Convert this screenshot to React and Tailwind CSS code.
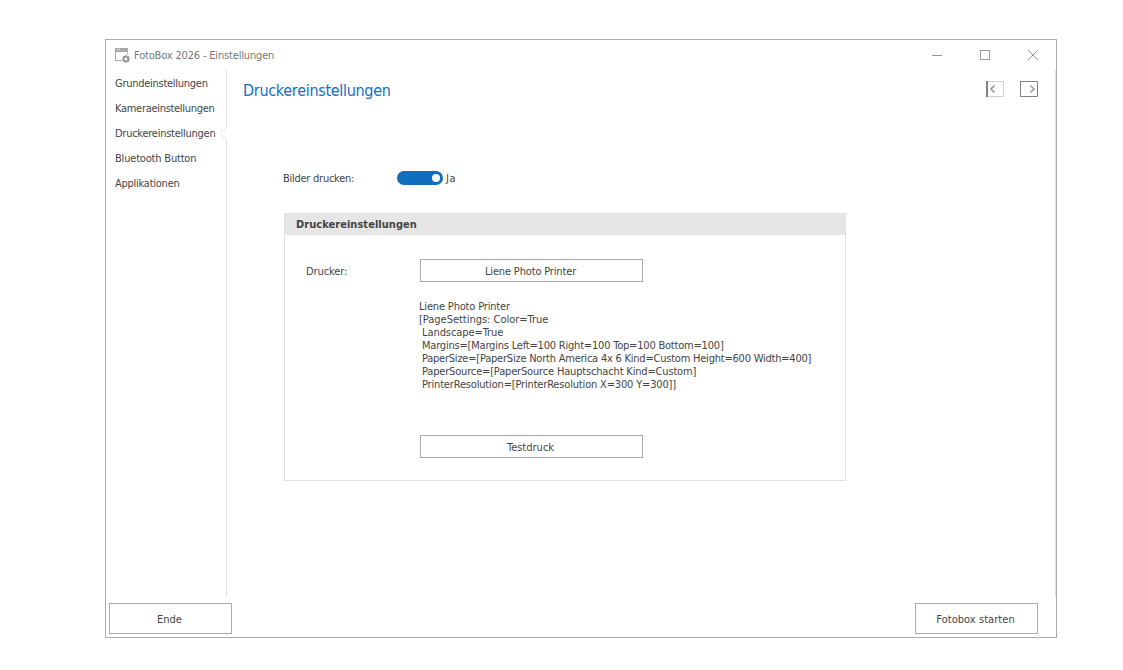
import React from 'react';

const navItems = [
  { label: 'Grundeinstellungen', className: 'tracking-[-0.27px]' },
  { label: 'Kameraeinstellungen', className: 'tracking-[-0.3px]' },
  { label: 'Druckereinstellungen', className: 'tracking-[-0.26px]' },
  { label: 'Bluetooth Button', className: 'tracking-[-0.19px]' },
  { label: 'Applikationen', className: 'tracking-[-0.25px]' },
];

const printerInfo = [
  { text: 'Liene Photo Printer', className: 'tracking-[-0.17px]' },
  { text: '[PageSettings: Color=True', className: 'tracking-[-0.02px]' },
  { text: ' Landscape=True', className: 'tracking-[-0.08px]' },
  { text: ' Margins=[Margins Left=100 Right=100 Top=100 Bottom=100]', className: 'tracking-[-0.2px]' },
  { text: ' PaperSize=[PaperSize North America 4x 6 Kind=Custom Height=600 Width=400]', className: 'tracking-[-0.22px]' },
  { text: ' PaperSource=[PaperSource Hauptschacht Kind=Custom]', className: 'tracking-[-0.17px]' },
  { text: ' PrinterResolution=[PrinterResolution X=300 Y=300]]', className: 'tracking-[-0.17px]' },
];

const AppIcon = () => (
  <svg width="16" height="16" viewBox="0 0 16 16" className="shrink-0">
    <path d="M0 1h13v4H0z" fill="#a8a8a8" />
    <path d="M2 2.5h1M4 2.5h1" stroke="#fff" />
    <path d="M.5 5v8.5H7" fill="none" stroke="#a8a8a8" />
    <path d="M12.5 5v3" stroke="#d0d0d0" />
    <circle cx="11" cy="12" r="2.3" fill="none" stroke="#999" strokeWidth="1.9" />
    <path
      d="M11 8v1.500M11 14.500V16M7 12h1.500M13.500 12H15M8.200 9.200l1 1M12.800 13.800l1 1M13.800 9.200l-1 1M9.200 13.800l-1 1"
      stroke="#999"
      strokeWidth="1.5"
    />
  </svg>
);

const PushButton = ({ children, className }) => (
  <button
    className={`flex items-center justify-center border border-[#ababab] bg-white pr-[2px] pt-px ${className}`}
  >
    {children}
  </button>
);

const TitleBar = () => (
  <header className="flex h-[30px] shrink-0 items-center justify-between pl-[9px] pr-[17px] text-[#777]">
    <div className="flex items-center gap-[3px]">
      <AppIcon />
      <span className="pt-px tracking-[-0.17px]">FotoBox 2026 - Einstellungen</span>
    </div>
    <svg width="108" height="12" viewBox="0 0 108 12" fill="none" stroke="#999" shapeRendering="crispEdges">
      <path d="M1 6.5h10" />
      <path d="M49.5 1.5h9v9h-9z" />
      <path d="M97 1l10 10M107 1L97 11" shapeRendering="auto" />
    </svg>
  </header>
);

const Sidebar = () => (
  <nav className="relative w-[121px] shrink-0">
    <ul className="flex flex-col pl-[9px] pt-px">
      {navItems.map((item) => (
        <li key={item.label} className={`flex h-[25px] items-center ${item.className}`}>
          {item.label}
        </li>
      ))}
    </ul>
    {/* divider with the notch that marks the selected page */}
    <svg
      width="8"
      height="527"
      viewBox="0 0 8 527"
      fill="none"
      stroke="#e0e0e0"
      className="absolute right-0 top-0"
    >
      <path d="M7.5 0v57l-6.5 6.5 6.5 6.5v457" />
    </svg>
  </nav>
);

const PageArrows = () => (
  <svg width="52" height="16" viewBox="0 0 52 16" fill="none">
    <path d="M0 .5h17.5v15H0" stroke="#d0d0d0" />
    <path d="M1 0v16" stroke="#808080" strokeWidth="2" />
    <path d="M8.5 4.5L5 8l3.5 3.5" stroke="#999" strokeWidth="1.6" />
    <path d="M34.5 .5h17v15h-17z" stroke="#808080" />
    <path d="M44.5 4.5L48 8l-3.5 3.5" stroke="#999" strokeWidth="1.6" />
  </svg>
);

const App = () => {
  return (
    <div className="flex h-[670px] w-[1123px] overflow-hidden bg-white pl-[105px] pt-[39px] font-['DejaVu_Sans_Condensed','DejaVu_Sans',sans-serif] text-[11px] leading-[13px] text-[#444] [font-stretch:condensed]">
      <div className="flex h-[599px] w-[952px] flex-col border border-[#ababab] bg-white">
        <TitleBar />

        <div className="flex h-[527px] shrink-0">
          <Sidebar />
          <main className="flex-1 border-r border-[#e0e0e0]">
            <div className="flex h-[40px] items-center justify-between pl-4 pr-[17px]">
              <h1 className="pt-px text-[16px] leading-5 tracking-[-0.3px] text-[#1070c0]">Druckereinstellungen</h1>
              <div className="pb-[2px]">
                <PageArrows />
              </div>
            </div>

            <div className="mt-[61px] flex h-[14px] items-center pl-[56px]">
              <span className="w-[114px] tracking-[-0.26px]">Bilder drucken:</span>
              <span className="flex h-[14px] w-[46px] items-center justify-end rounded-full bg-[#106ebe] pr-[3px]">
                <span className="h-2 w-2 rounded-full bg-white" />
              </span>
              <span className="ml-[3px] tracking-[0.5px]">Ja</span>
            </div>

            {/* printer group box */}
            <section className="ml-[57px] mt-[28px] h-[268px] w-[562px] border border-[#e0e0e0]">
              <h2 className="flex h-[21px] items-center bg-[#e6e6e6] pl-[11px] font-bold tracking-[0.04px]">
                Druckereinstellungen
              </h2>
              <div className="flex pl-[21px] pt-[24px]">
                <span className="w-[114px] pt-[6px] tracking-[-0.1px]">Drucker:</span>
                <div className="flex flex-col">
                  <PushButton className="h-[23px] w-[223px] tracking-[-0.16px]">Liene Photo Printer</PushButton>
                  <div className="-ml-px mt-[18px] h-[135px] whitespace-pre">
                    {printerInfo.map((line) => (
                      <p key={line.text}>
                        <span className={line.className}>{line.text}</span>
                      </p>
                    ))}
                  </div>
                  <PushButton className="h-[23px] w-[223px]">Testdruck</PushButton>
                </div>
              </div>
            </section>
          </main>
        </div>

        <footer className="flex justify-between pl-[3px] pr-[18px] pt-[6px]">
          <PushButton className="h-[31px] w-[123px]">Ende</PushButton>
          <PushButton className="h-[31px] w-[123px] tracking-[0.05px]">Fotobox starten</PushButton>
        </footer>
      </div>
    </div>
  );
};

export default App;
